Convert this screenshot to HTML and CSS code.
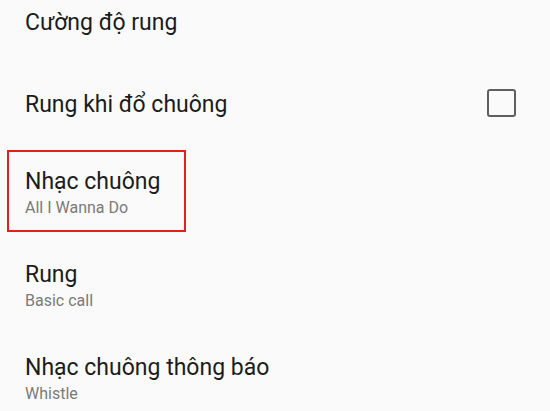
FILE: index.html
```html
<!DOCTYPE html>
<html lang="vi">
<head>
  <meta charset="UTF-8" />
  <meta name="viewport" content="width=device-width, initial-scale=1.0"/>
  <title>Âm thanh và rung</title>
  <link rel="stylesheet" href="styles.css">
</head>
<body>

<ul class="settings">
  <li class="item item-top">
    <div class="item-text">
      <span class="title">Cường độ rung</span>
    </div>
  </li>

  <li class="item item-single">
    <div class="item-text">
      <span class="title">Rung khi đổ chuông</span>
    </div>
    <span class="checkbox"></span>
  </li>

  <!-- Ringtone row, marked with a red frame -->
  <li class="item item-double marked">
    <div class="item-text">
      <span class="title">Nhạc chuông</span>
      <span class="summary">All I Wanna Do</span>
    </div>
    <span class="mark"></span>
  </li>

  <li class="item item-double">
    <div class="item-text">
      <span class="title">Rung</span>
      <span class="summary">Basic call</span>
    </div>
  </li>

  <li class="item item-double">
    <div class="item-text">
      <span class="title">Nhạc chuông thông báo</span>
      <span class="summary">Whistle</span>
    </div>
  </li>
</ul>

</body>
</html>
```

FILE: styles.css
```css
body {
  margin: 0;
  background: #fafafa;
  font-family: Roboto, 'Noto Sans', sans-serif;
  color: #1c1c1c;
  overflow: hidden;
}

.settings {
  list-style: none;
  margin: 0;
  padding: 0;
}

.item {
  display: flex;
  align-items: center;
  justify-content: space-between;
  padding: 0 34px 0 25px;
  box-sizing: border-box;
}

.item-top {
  height: 64px;
  align-items: flex-start;
  padding-top: 9px;
}

.item-single {
  height: 82px;
}

.item-double {
  height: 93px;
  padding-top: 1px;
}

.item-text {
  display: flex;
  flex-direction: column;
}

.title {
  font-size: 23px;
  line-height: 28px;
}

.summary {
  margin-top: 2px;
  font-size: 16px;
  line-height: 20px;
  color: #7a7a7a;
}

.checkbox {
  width: 25px;
  height: 24px;
  margin-bottom: 5px;
  border: 2.5px solid #5f5f5f;
  border-radius: 3px;
}

.marked {
  position: relative;
}

.mark {
  position: absolute;
  left: 7px;
  top: 4px;
  width: 179px;
  height: 82px;
  box-sizing: border-box;
  border: 2px solid #e3201b;
}
```
